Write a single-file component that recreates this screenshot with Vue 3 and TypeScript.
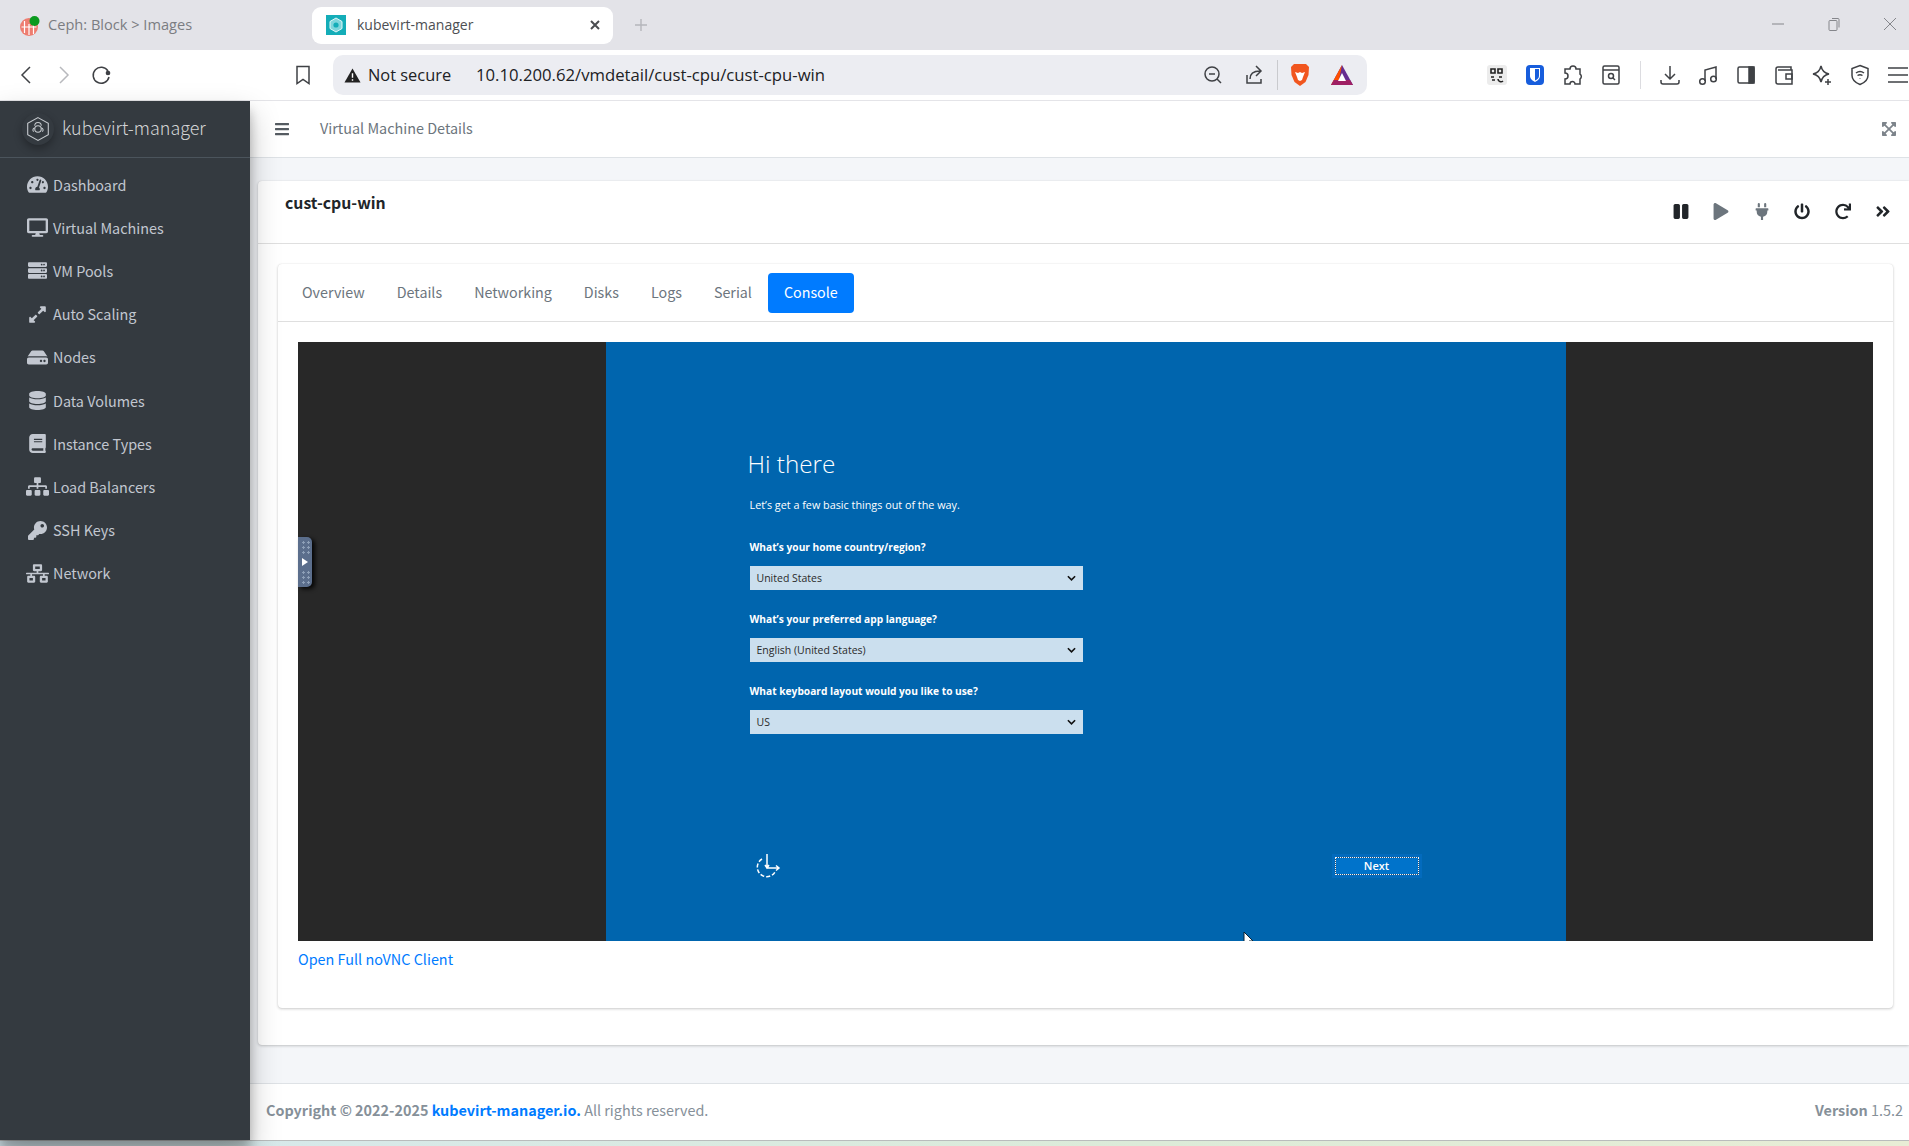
<template>
  <div class="window">
    <div class="tabstrip">
      <div class="tab">
        <svg class="fav" viewBox="0 0 20 20">
          <circle cx="9" cy="11" r="9" fill="#ee7d70" />
          <path d="M4.500 5v12M9 8v11M13.500 8v10M1.500 11h15" stroke="#fff" stroke-width="1.200" fill="none" />
          <circle cx="14.500" cy="5" r="5" fill="#0b9a1f" />
        </svg>
        <span class="tab-label">Ceph: Block &gt; Images</span>
      </div>
      <div class="tab is-active">
        <svg class="fav" viewBox="0 0 20 20">
          <rect width="20" height="20" fill="#14adb8" />
          <path d="M10 3l6 3.500v7L10 17l-6-3.500v-7z" fill="#7fd6dc" stroke="#e3f7f8" stroke-width="1" />
          <circle cx="10" cy="10" r="2.600" fill="#14adb8" />
        </svg>
        <span class="tab-title">kubevirt-manager</span>
        <svg class="tab-close" viewBox="0 0 12 12"><path d="M2 2l8 8M10 2l-8 8" /></svg>
      </div>
      <svg class="tab-new" viewBox="0 0 14 14"><path d="M7 1v12M1 7h12" /></svg>
      <div class="winctl">
        <svg viewBox="0 0 14 14"><path d="M1 7h12" /></svg>
        <svg viewBox="0 0 14 14"><rect x="2" y="3.500" width="8" height="10" rx="1" /><path d="M5 1.500h6a1 1 0 0 1 1 1v8" /></svg>
        <svg viewBox="0 0 14 14"><path d="M1 1l12 12M13 1L1 13" /></svg>
      </div>
    </div>

    <div class="toolbar">
      <div class="nav-btns">
        <svg class="tool" viewBox="0 0 22 22"><path d="M15 3l-8 8 8 8" /></svg>
        <svg class="tool is-off" viewBox="0 0 22 22"><path d="M7 3l8 8-8 8" /></svg>
        <svg class="tool" viewBox="0 0 22 22"><path d="M17 7a8 8 0 1 0 1 6" /><circle cx="17" cy="9" r="1.600" fill="#3f4145" /></svg>
      </div>
      <svg class="tool bookmark" viewBox="0 0 22 22"><path d="M5 2.500h12v17l-6-4-6 4z" /></svg>
      <div class="omnibox">
        <svg class="warn" viewBox="0 0 18 18"><path d="M9 1.500L17.500 16.500H.5z" fill="#222" /><path d="M9 6.500v5M9 13v1.600" stroke="#fff" stroke-width="1.500" /></svg>
        <span class="not-secure">Not secure</span>
        <span class="url">10.10.200.62/vmdetail/cust-cpu/cust-cpu-win</span>
        <div class="omni-icons">
          <svg class="tool zoom-btn" viewBox="0 0 22 22"><circle cx="10" cy="10" r="7" /><path d="M7 10h6M15 15l4 4" /></svg>
          <svg class="tool" viewBox="0 0 22 22"><path d="M4 11v8h14v-4M7 15c0-6 4-8 10-8M13 2l5 5-5 5" /></svg>
          <i class="omni-sep"></i>
          <svg class="brave" viewBox="0 0 22 24">
            <path d="M5 1h12l3 3-.5 8-3 7-5.500 4-5.500-4-3-7L2 4z" fill="#f1561f" />
            <path d="M6 9l3 1 2-1 2 1 3-1-2 5-1 3-2 1-2-1-1-3z" fill="#fff" />
          </svg>
          <svg class="bat" viewBox="0 0 24 22">
            <path d="M12 1L1 21h22z" fill="#662d91" />
            <path d="M12 1L1 21h7z" fill="#ff5000" />
            <path d="M1 21h22l-3-5H4z" fill="#9e1f63" />
            <path d="M12 9l-4 8h8z" fill="#fff" />
          </svg>
        </div>
      </div>
      <div class="ext-icons">
        <svg class="tool qr" viewBox="0 0 22 22">
          <rect x="1" y="1" width="20" height="20" rx="3" fill="#ececec" stroke="none" />
          <path d="M5 5h4v4H5zM12 5h4v4h-4zM5 13h3M6 16h3M13 13l3 0M12 15a3 3 0 0 0 5 2" stroke="#222" stroke-width="1.600" />
        </svg>
        <svg class="ext" viewBox="0 0 22 22">
          <rect x="2" y="1" width="18" height="20" rx="4" fill="#175ddc" />
          <path d="M6 4h10v8c0 3-3 5-5 6-2-1-5-3-5-6z" fill="#fff" />
          <path d="M11 5h4v7c0 2-2 3.500-4 4.500z" fill="#175ddc" />
        </svg>
        <svg class="tool" viewBox="0 0 22 22"><path d="M8 5a3 3 0 0 1 6 0h4v5a3 3 0 0 1 0 5v5h-5a2.500 2.500 0 0 0-5 0H3v-5a3 3 0 0 0 0-6V5z" /></svg>
        <svg class="tool" viewBox="0 0 22 22"><rect x="3" y="2" width="16" height="18" rx="1.500" /><path d="M3 6h16" /><circle cx="11" cy="12" r="2.500" /><path d="M13 14l2 2" /></svg>
        <i class="ext-sep"></i>
        <svg class="tool" viewBox="0 0 22 22"><path d="M11 2v13M6 10l5 5 5-5M2 16v2a2 2 0 0 0 2 2h14a2 2 0 0 0 2-2v-2" /></svg>
        <svg class="tool" viewBox="0 0 22 22"><path d="M8 17V6l11-3v12" /><circle cx="5.500" cy="17.500" r="2.800" /><circle cx="16.500" cy="15" r="2.800" /></svg>
        <svg class="tool" viewBox="0 0 22 22"><rect x="3" y="3" width="16" height="16" rx="1.500" /><path d="M14 3h5v16h-5z" fill="#3f4145" /></svg>
        <svg class="tool" viewBox="0 0 22 22"><path d="M18 6V3H5a2 2 0 0 0-2 2v13a2 2 0 0 0 2 2h14V6H5" /><rect x="13" y="10" width="6" height="5" /></svg>
        <svg class="tool" viewBox="0 0 22 22"><path d="M10 2c1 5 3 7 8 8-5 1-7 3-8 8-1-5-3-7-8-8 5-1 7-3 8-8zM17 15v6M14 18h6" /></svg>
        <svg class="tool" viewBox="0 0 22 22"><path d="M11 1.500l8 3v7c0 4-3 7-8 9-5-2-8-5-8-9v-7z" /><path d="M7 9c2.500-2 5.500-2 8 0M8.500 11.500c1.500-1 3.500-1 5 0M11 14v.5" /></svg>
        <svg class="tool" viewBox="0 0 22 22"><path d="M1 4h20M1 11h20M1 18h20" /></svg>
      </div>
    </div>

    <div class="app">
      <aside class="sidebar">
        <div class="brand">
          <span class="brand-mark">
            <svg viewBox="0 0 24 24">
              <path d="M12 1.500l9.500 5.300v10.400L12 22.500l-9.500-5.300V6.800z" />
              <circle cx="12" cy="12" r="3" />
              <path d="M8 14.500a2 2 0 0 1 1-3.500M16 14.500a2 2 0 0 0-1-3.500M9 9a3 3 0 0 1 6 0" />
            </svg>
          </span>
          <span class="brand-text">kubevirt-manager</span>
        </div>
        <nav class="menu">
          <a v-for="item in menu" :key="item.label" class="menu-item">
            <span class="menu-icon">
              <svg :viewBox="`0 0 ${item.w} 512`" :style="{ width: `${item.size}px` }"><path :d="item.d" /></svg>
            </span>
            <span class="menu-label">{{ item.label }}</span>
          </a>
        </nav>
      </aside>

      <div class="content">
        <header class="topbar">
          <svg class="fa bars" viewBox="0 0 448 512"><path :d="icons.bars" /></svg>
          <span class="crumb">Virtual Machine Details</span>
          <svg class="fa full" viewBox="0 0 448 512"><path :d="icons.expand" /></svg>
        </header>

        <main class="body">
          <section class="card">
            <div class="card-head">
              <h3 class="card-title">cust-cpu-win</h3>
              <div class="actions">
                <svg v-for="a in actions" :key="a.name" :class="{ 'is-muted': a.muted }" :viewBox="`0 0 ${a.w} 512`">
                  <path :d="a.d" />
                </svg>
              </div>
            </div>
            <div class="card-body">
              <div class="inner-card">
                <ul class="tabs">
                  <li v-for="t in tabs" :key="t" class="tab-link" :class="{ 'is-current': t === 'Console' }">{{ t }}</li>
                </ul>
                <div class="console">
                  <div class="vnc">
                    <div class="vnc-handle">
                      <i class="dots"></i>
                      <svg viewBox="0 0 6 8"><path d="M0 0l6 4-6 4z" fill="#fff" /></svg>
                      <i class="dots"></i>
                    </div>
                    <div class="setup">
                      <div class="setup-form">
                        <h1>Hi there</h1>
                        <p class="setup-sub">Let’s get a few basic things out of the way.</p>
                        <template v-for="f in setupFields" :key="f.label">
                          <div class="setup-label">{{ f.label }}</div>
                          <div class="setup-select">
                            <span>{{ f.value }}</span>
                            <svg viewBox="0 0 10 7"><path d="M1 1l4 4 4-4" /></svg>
                          </div>
                        </template>
                      </div>
                      <div class="setup-foot">
                        <svg class="ease" viewBox="0 0 26 26">
                          <path d="M7 6a9.500 9.500 0 1 0 13 13" stroke-dasharray="4 2" />
                          <path d="M12 1v14h12M10 12l2 3 2-3M21 12.500l3 2.500-3 2.500" />
                        </svg>
                        <div class="next-btn"><span>Next</span></div>
                      </div>
                      <svg class="cursor" viewBox="0 0 10 14"><path d="M1 0v12l3-3 2 5 2-1-2-4h4z" fill="#fff" stroke="#0b2233" stroke-width="1" /></svg>
                    </div>
                  </div>
                  <a class="novnc-link">Open Full noVNC Client</a>
                </div>
              </div>
            </div>
          </section>
        </main>

        <footer class="footer">
          <div><b>Copyright © 2022-2025 <span class="link">kubevirt-manager.io.</span></b> All rights reserved.</div>
          <div><b>Version</b> 1.5.2</div>
        </footer>
      </div>
    </div>
    <div class="desktop"></div>
  </div>
</template>

<script setup lang="ts">
const icons = {
  bars: 'M16 132h416c8.837 0 16-7.163 16-16V76c0-8.837-7.163-16-16-16H16C7.163 60 0 67.163 0 76v40c0 8.837 7.163 16 16 16zm0 160h416c8.837 0 16-7.163 16-16v-40c0-8.837-7.163-16-16-16H16c-8.837 0-16 7.163-16 16v40c0 8.837 7.163 16 16 16zm0 160h416c8.837 0 16-7.163 16-16v-40c0-8.837-7.163-16-16-16H16c-8.837 0-16 7.163-16 16v40c0 8.837 7.163 16 16 16z',
  expand: 'M448 344v112a23.94 23.94 0 0 1-24 24H312c-21.39 0-32.09-25.9-17-41l36.2-36.2L224 295.6 116.77 402.9 153 439c15.09 15.1 4.39 41-17 41H24a23.94 23.94 0 0 1-24-24V344c0-21.4 25.89-32.1 41-17l36.19 36.2L184.46 256 77.18 148.7 41 185c-15.1 15.1-41 4.4-41-17V56a23.94 23.94 0 0 1 24-24h112c21.39 0 32.09 25.9 17 41l-36.2 36.2L224 216.4l107.23-107.3L295 73c-15.09-15.1-4.39-41 17-41h112a23.94 23.94 0 0 1 24 24v112c0 21.4-25.89 32.1-41 17l-36.19-36.2L263.54 256l107.28 107.3L407 327.1c15.1-15.2 41-4.5 41 16.9z',
};

const menu = [
  { label: 'Dashboard', w: 576, size: 21, d: 'M288 32C128.94 32 0 160.94 0 320c0 52.8 14.25 102.26 39.06 144.8 5.61 9.62 16.3 15.2 27.44 15.2h443c11.14 0 21.83-5.58 27.44-15.2C561.75 422.26 576 372.8 576 320c0-159.06-128.94-288-288-288zm0 64c14.71 0 26.58 10.13 30.32 23.65-1.11 2.26-2.64 4.23-3.45 6.67l-9.22 27.67c-5.13 3.49-10.97 6.01-17.64 6.01-17.67 0-32-14.33-32-32S270.33 96 288 96zM96 384c-17.67 0-32-14.33-32-32s14.33-32 32-32 32 14.33 32 32-14.33 32-32 32zm48-160c-17.67 0-32-14.33-32-32s14.33-32 32-32 32 14.33 32 32-14.33 32-32 32zm246.77-72.41l-61.33 184C343.13 347.33 352 364.54 352 384c0 11.72-3.38 22.55-8.88 32H232.88c-5.5-9.45-8.88-20.28-8.88-32 0-33.94 26.5-61.43 59.9-63.59l61.34-184.01c4.17-12.56 17.73-19.45 30.36-15.17 12.57 4.19 19.35 17.79 15.17 30.36zm14.66 57.2l15.52-46.55c3.47-1.29 7.13-2.23 11.05-2.23 17.67 0 32 14.33 32 32s-14.33 32-32 32c-11.38-.01-20.89-6.28-26.57-15.22zM480 384c-17.67 0-32-14.33-32-32s14.33-32 32-32 32 14.33 32 32-14.33 32-32 32z' },
  { label: 'Virtual Machines', w: 576, size: 21, d: 'M528 0H48C21.5 0 0 21.5 0 48v320c0 26.5 21.5 48 48 48h192l-16 48h-72c-13.3 0-24 10.7-24 24s10.7 24 24 24h272c13.3 0 24-10.7 24-24s-10.7-24-24-24h-72l-16-48h192c26.5 0 48-21.5 48-48V48c0-26.5-21.5-48-48-48zm-16 352H64V64h448v288z' },
  { label: 'VM Pools', w: 512, size: 19, d: 'M480 160H32c-17.673 0-32-14.327-32-32V64c0-17.673 14.327-32 32-32h448c17.673 0 32 14.327 32 32v64c0 17.673-14.327 32-32 32zm-48-88c-13.255 0-24 10.745-24 24s10.745 24 24 24 24-10.745 24-24-10.745-24-24-24zm-64 0c-13.255 0-24 10.745-24 24s10.745 24 24 24 24-10.745 24-24-10.745-24-24-24zm112 248H32c-17.673 0-32-14.327-32-32v-64c0-17.673 14.327-32 32-32h448c17.673 0 32 14.327 32 32v64c0 17.673-14.327 32-32 32zm-48-88c-13.255 0-24 10.745-24 24s10.745 24 24 24 24-10.745 24-24-10.745-24-24-24zm-64 0c-13.255 0-24 10.745-24 24s10.745 24 24 24 24-10.745 24-24-10.745-24-24-24zm112 248H32c-17.673 0-32-14.327-32-32v-64c0-17.673 14.327-32 32-32h448c17.673 0 32 14.327 32 32v64c0 17.673-14.327 32-32 32zm-48-88c-13.255 0-24 10.745-24 24s10.745 24 24 24 24-10.745 24-24-10.745-24-24-24zm-64 0c-13.255 0-24 10.745-24 24s10.745 24 24 24 24-10.745 24-24-10.745-24-24-24z' },
  { label: 'Auto Scaling', w: 448, size: 17, d: 'M212.686 315.314L120 408l32.922 31.029c15.12 15.12 4.412 40.971-16.97 40.971h-112C10.697 480 0 469.255 0 456V344c0-21.382 25.803-32.09 40.922-16.971L72 360l92.686-92.686c6.248-6.248 16.379-6.248 22.627 0l25.373 25.373c6.249 6.248 6.249 16.378 0 22.627zm22.628-118.628L328 104l-32.922-31.029C279.958 57.851 290.666 32 312.048 32h112C437.303 32 448 42.745 448 56v112c0 21.382-25.803 32.09-40.922 16.971L376 152l-92.686 92.686c-6.248 6.248-16.379 6.248-22.627 0l-25.373-25.373c-6.249-6.248-6.249-16.378 0-22.627z' },
  { label: 'Nodes', w: 576, size: 21, d: 'M576 304v96c0 26.51-21.49 48-48 48H48c-26.51 0-48-21.49-48-48v-96c0-26.51 21.49-48 48-48h480c26.51 0 48 21.49 48 48zm-48-80a79.557 79.557 0 0 1 30.777 6.165L462.25 85.374A48.003 48.003 0 0 0 422.311 64H153.689a48 48 0 0 0-39.938 21.374L17.223 230.165A79.557 79.557 0 0 1 48 224h480zm-48 96c-17.673 0-32 14.327-32 32s14.327 32 32 32 32-14.327 32-32-14.327-32-32-32zm-96 0c-17.673 0-32 14.327-32 32s14.327 32 32 32 32-14.327 32-32-14.327-32-32-32z' },
  { label: 'Data Volumes', w: 448, size: 17, d: 'M448 73.143v45.714C448 159.143 347.667 192 224 192S0 159.143 0 118.857V73.143C0 32.857 100.333 0 224 0s224 32.857 224 73.143zM448 176v102.857C448 319.143 347.667 352 224 352S0 319.143 0 278.857V176c48.125 33.143 136.208 48.572 224 48.572S399.874 209.143 448 176zm0 160v102.857C448 479.143 347.667 512 224 512S0 479.143 0 438.857V336c48.125 33.143 136.208 48.572 224 48.572S399.874 369.143 448 336z' },
  { label: 'Instance Types', w: 448, size: 17, d: 'M448 360V24c0-13.3-10.7-24-24-24H96C43 0 0 43 0 96v320c0 53 43 96 96 96h328c13.3 0 24-10.7 24-24v-16c0-7.5-3.5-14.3-8.9-18.7-4.2-15.4-4.2-59.3 0-74.7 5.4-4.3 8.9-11.1 8.9-18.6zM128 134c0-3.3 2.7-6 6-6h212c3.3 0 6 2.7 6 6v20c0 3.3-2.7 6-6 6H134c-3.3 0-6-2.7-6-6v-20zm0 64c0-3.3 2.7-6 6-6h212c3.3 0 6 2.7 6 6v20c0 3.3-2.7 6-6 6H134c-3.3 0-6-2.7-6-6v-20zm253.4 250H96c-17.7 0-32-14.3-32-32 0-17.6 14.4-32 32-32h285.4c-1.9 17.1-1.9 46.9 0 64z' },
  { label: 'Load Balancers', w: 640, size: 23, d: 'M128 352H32c-17.67 0-32 14.33-32 32v96c0 17.67 14.33 32 32 32h96c17.67 0 32-14.33 32-32v-96c0-17.67-14.33-32-32-32zm-24-80h192v48h48v-48h192v48h48v-57.59c0-21.17-17.23-38.41-38.41-38.41H344v-64h40c17.67 0 32-14.33 32-32V32c0-17.67-14.33-32-32-32H256c-17.67 0-32 14.33-32 32v96c0 17.67 14.33 32 32 32h40v64H94.41C73.23 224 56 241.23 56 262.41V320h48v-48zm264 80h-96c-17.67 0-32 14.33-32 32v96c0 17.67 14.33 32 32 32h96c17.67 0 32-14.33 32-32v-96c0-17.67-14.33-32-32-32zm240 0h-96c-17.67 0-32 14.33-32 32v96c0 17.67 14.33 32 32 32h96c17.67 0 32-14.33 32-32v-96c0-17.67-14.33-32-32-32z' },
  { label: 'SSH Keys', w: 512, size: 19, d: 'M512 176.001C512 273.203 433.202 352 336 352c-11.22 0-22.19-1.062-32.827-3.069l-24.012 27.014A23.999 23.999 0 0 1 261.223 384H224v40c0 13.255-10.745 24-24 24h-40v40c0 13.255-10.745 24-24 24H24c-13.255 0-24-10.745-24-24v-78.059c0-6.365 2.529-12.47 7.029-16.971l161.802-161.802C163.108 213.814 160 195.271 160 176 160 78.798 238.797.001 335.999 0 433.488-.001 512 78.511 512 176.001zM336 128c0 26.51 21.49 48 48 48s48-21.49 48-48-21.49-48-48-48-48 21.49-48 48z' },
  { label: 'Network', w: 640, size: 23, d: 'M640 264v-16c0-8.84-7.16-16-16-16H344v-40h72c17.67 0 32-14.33 32-32V32c0-17.67-14.33-32-32-32H224c-17.67 0-32 14.33-32 32v128c0 17.67 14.33 32 32 32h72v40H16c-8.84 0-16 7.16-16 16v16c0 8.84 7.16 16 16 16h104v40H64c-17.67 0-32 14.33-32 32v128c0 17.67 14.33 32 32 32h160c17.67 0 32-14.33 32-32V352c0-17.67-14.33-32-32-32h-56v-40h304v40h-56c-17.67 0-32 14.33-32 32v128c0 17.67 14.33 32 32 32h160c17.67 0 32-14.33 32-32V352c0-17.67-14.33-32-32-32h-56v-40h104c8.84 0 16-7.16 16-16zM256 128V64h128v64H256zm-64 320H96v-64h96v64zm352 0h-96v-64h96v64z' },
];

const actions = [
  { name: 'pause', w: 448, d: 'M144 479H48c-26.5 0-48-21.5-48-48V79c0-26.5 21.5-48 48-48h96c26.5 0 48 21.5 48 48v352c0 26.5-21.5 48-48 48zm304-48V79c0-26.5-21.5-48-48-48h-96c-26.5 0-48 21.5-48 48v352c0 26.500 21.5 48 48 48h96c26.5 0 48-21.5 48-48z' },
  { name: 'play', w: 448, muted: true, d: 'M424.4 214.7L72.4 6.6C43.8-10.3 0 6.1 0 47.9V464c0 37.5 40.7 60.1 72.4 41.3l352-208c31.4-18.5 31.5-64.1 0-82.6z' },
  { name: 'plug', w: 384, muted: true, d: 'M320,32a32,32,0,0,0-64,0v96h64Zm48,128H16A16,16,0,0,0,0,176v32a16,16,0,0,0,16,16H32v32A160.07,160.07,0,0,0,160,412.8V512h64V412.8A160.07,160.07,0,0,0,352,256V224h16a16,16,0,0,0,16-16V176A16,16,0,0,0,368,160ZM128,32a32,32,0,0,0-64,0v96h64Z' },
  { name: 'power', w: 512, d: 'M400 54.1c63 45 104 118.6 104 201.9 0 136.8-110.8 247.7-247.5 248C120 504.3 8.2 393 8 256.4 7.9 173.1 48.9 99.3 111.8 54.2c11.7-8.3 28-4.8 35 7.7L162.6 90c5.9 10.5 3.1 23.8-6.6 31-41.5 30.8-68 79.6-68 134.9-.1 92.3 74.5 168.1 168 168.1 91.6 0 168.6-74.2 168-169.1-.3-51.8-24.7-101.8-68.1-134-9.7-7.2-12.4-20.5-6.5-30.9l15.8-28.1c7-12.4 23.2-16.1 34.8-7.8zM296 264V24c0-13.3-10.7-24-24-24h-32c-13.3 0-24 10.7-24 24v240c0 13.3 10.7 24 24 24h32c13.3 0 24-10.7 24-24z' },
  { name: 'redo', w: 512, d: 'M500.33 0h-47.41a12 12 0 0 0-12 12.57l4 82.76A247.42 247.42 0 0 0 256 8C119.34 8 7.9 119.53 8 256.19 8.1 393.07 119.1 504 256 504a247.1 247.1 0 0 0 166.18-63.91 12 12 0 0 0 .48-17.43l-34-34a12 12 0 0 0-16.38-.55A176 176 0 1 1 402.1 157.8l-101.53-4.87a12 12 0 0 0-12.57 12v47.41a12 12 0 0 0 12 12h200.33a12 12 0 0 0 12-12V12a12 12 0 0 0-12-12z' },
  { name: 'more', w: 448, d: 'M224.3 273l-136 136c-9.4 9.4-24.6 9.4-33.9 0l-22.6-22.6c-9.4-9.4-9.4-24.6 0-33.9l96.4-96.4-96.4-96.4c-9.4-9.4-9.4-24.6 0-33.9L54.3 103c9.4-9.4 24.6-9.4 33.9 0l136 136c9.5 9.4 9.5 24.6.1 34zm192-34l-136-136c-9.4-9.4-24.6-9.4-33.9 0l-22.6 22.6c-9.4 9.4-9.4 24.6 0 33.9l96.4 96.4-96.4 96.4c-9.4 9.4-9.4 24.6 0 33.9l22.6 22.6c9.4 9.4 24.6 9.4 33.9 0l136-136c9.4-9.2 9.4-24.4 0-33.8z' },
];

const tabs = ['Overview', 'Details', 'Networking', 'Disks', 'Logs', 'Serial', 'Console'];

const setupFields = [
  { label: 'What’s your home country/region?', value: 'United States' },
  { label: 'What’s your preferred app language?', value: 'English (United States)' },
  { label: 'What keyboard layout would you like to use?', value: 'US' },
];
</script>

<style>
body {
  margin: 0;
  background: #fff;
}
</style>

<style scoped>
.window {
  width: 1909px;
  height: 1146px;
  display: flex;
  flex-direction: column;
  overflow: hidden;
  font-family: "Noto Sans CJK SC", "Noto Sans", sans-serif;
  font-size: 14.400px;
  color: #212529;
}

.tabstrip {
  height: 50px;
  background: #e3e3e8;
  display: flex;
  align-items: flex-start;
  font-family: "Open Sans", sans-serif;
  font-size: 14px;
  color: #7b7d82;
  flex: none;
}

.tab {
  width: 283px;
  height: 37px;
  margin-top: 7px;
  margin-left: 20px;
  display: flex;
  align-items: center;
  gap: 8px;
  box-sizing: border-box;
  margin-right: 9px;
}

.tab-label {
  font-size: 14.600px;
  padding-bottom: 3px;
}

.tab.is-active {
  width: 301px;
  margin-left: 0;
  margin-right: 0;
  background: #fff;
  border-radius: 9px;
  padding: 0 12px 2px 14px;
  gap: 11px;
  color: #4d4f53;
}

.fav {
  width: 20px;
  height: 20px;
  flex: none;
}

.tab-title {
  flex: 1;
}

.tab-close {
  width: 12px;
  height: 12px;
  fill: none;
  stroke: #4a4c50;
  stroke-width: 2;
}

.tab-new {
  width: 14px;
  height: 14px;
  margin: 18px 0 0 21px;
  fill: none;
  stroke: #b5b6bb;
  stroke-width: 1.400;
}

.winctl {
  margin-left: auto;
  display: flex;
  gap: 42px;
  padding: 17px 12px 0 0;
}

.winctl svg {
  width: 14px;
  height: 14px;
  fill: none;
  stroke: #85868b;
  stroke-width: 1;
}

.toolbar {
  height: 50px;
  background: #fff;
  border-bottom: 1px solid #e4e4e8;
  border-radius: 10px 0 0 0;
  display: flex;
  align-items: center;
  flex: none;
}

.nav-btns {
  display: flex;
  align-items: center;
  gap: 16px;
  margin-left: 15px;
  width: 278px;
}

.tool {
  width: 22px;
  height: 22px;
  fill: none;
  stroke: #3f4145;
  stroke-width: 1.500;
  flex: none;
}

.tool.is-off {
  stroke: #b8b9bd;
}

.bookmark {
  margin-right: 19px;
}

.omnibox {
  width: 1034px;
  height: 40px;
  background: #ecedf2;
  border-radius: 10px;
  display: flex;
  align-items: center;
  font-family: "Open Sans", sans-serif;
  font-size: 16.700px;
  color: #202124;
  padding: 0 13px 0 11px;
  box-sizing: border-box;
  flex: none;
}

.warn {
  width: 17px;
  height: 17px;
}

.not-secure {
  margin-left: 7px;
  width: 108px;
  flex: none;
  font-size: 16.400px;
  padding-bottom: 1px;
}

.url {
  flex: 1;
  white-space: nowrap;
  padding-bottom: 1px;
}

.omni-icons {
  display: flex;
  align-items: center;
  gap: 17px;
}

.zoom-btn {
  margin-right: 2px;
}

.omni-sep {
  width: 1px;
  height: 30px;
  background: #c9cace;
  margin: 0 -6px 0 -5px;
}

.brave {
  width: 22px;
  height: 24px;
}

.bat {
  width: 24px;
  height: 22px;
  margin-left: 2px;
}

.ext-icons {
  display: flex;
  align-items: center;
  gap: 16px;
  margin-left: 119px;
}

.ext {
  width: 22px;
  height: 22px;
}

.qr {
  stroke: #222;
}

.ext-sep {
  width: 1px;
  height: 28px;
  background: #dcdce0;
  margin: 0 2px;
}

.app {
  flex: 1;
  min-height: 0;
  display: flex;
}

.sidebar {
  width: 250px;
  flex: none;
  background: #343a40;
  color: #c2c7d0;
  box-shadow: 0 14px 28px rgba(0, 0, 0, 0.25), 0 10px 10px rgba(0, 0, 0, 0.22);
  position: relative;
  z-index: 2;
}

.brand {
  height: 56px;
  border-bottom: 1px solid #4b545c;
  display: flex;
  align-items: center;
  padding-left: 22px;
  gap: 8px;
}

.brand-mark {
  width: 32px;
  height: 32px;
  border-radius: 50%;
  background: #343a40;
  box-shadow: 0 4px 8px rgba(0, 0, 0, 0.3);
  display: grid;
  place-items: center;
}

.brand-mark svg {
  width: 26px;
  height: 26px;
  fill: none;
  stroke: #c6cace;
  stroke-width: 1;
}

.brand-text {
  font-size: 17.900px;
  font-weight: 300;
  color: rgba(255, 255, 255, 0.8);
  padding-bottom: 5px;
}

.menu {
  display: flex;
  flex-direction: column;
  padding-top: 5px;
}

.menu-item {
  height: 43.200px;
  display: flex;
  align-items: center;
  padding-left: 26px;
  gap: 4px;
}

.menu-icon {
  width: 23px;
  display: grid;
  place-items: center;
}

.menu-icon svg {
  display: block;
  height: 19px;
  fill: #c2c7d0;
}

.menu-label {
  padding-bottom: 1px;
}

.content {
  flex: 1;
  min-width: 0;
  display: flex;
  flex-direction: column;
  background: #f4f6f9;
}

.topbar {
  height: 56px;
  background: #fff;
  border-bottom: 1px solid #dee2e6;
  display: flex;
  align-items: center;
  padding: 0 13px 0 25px;
  flex: none;
}

.fa {
  width: 14px;
  height: 16px;
  fill: #555b61;
}

.crumb {
  margin-left: 31px;
  color: #6c757d;
  padding-bottom: 4px;
}

.full {
  margin-left: auto;
  fill: #7d848b;
}

.body {
  flex: 1;
  min-height: 0;
  padding: 23px 0 0 8px;
}

.card {
  height: 864px;
  background: #fff;
  border-radius: 4px 0 0 4px;
  box-shadow: 0 0 1px rgba(0, 0, 0, 0.125), 0 1px 3px rgba(0, 0, 0, 0.2);
  display: flex;
  flex-direction: column;
  box-sizing: border-box;
}

.card-head {
  height: 63px;
  flex: none;
  border-bottom: 1px solid rgba(0, 0, 0, 0.125);
  box-sizing: border-box;
  display: flex;
  justify-content: space-between;
  padding: 10px 18px 0 27px;
}

.card-title {
  margin: 0;
  font-size: 15.800px;
  font-weight: 700;
  line-height: 24px;
  color: #212529;
}

.actions {
  display: flex;
  gap: 24.500px;
  padding-top: 12px;
}

.actions svg {
  height: 17px;
  width: 16px;
  fill: #212529;
}

.actions svg.is-muted {
  fill: #6c757d;
}

.card-body {
  flex: 1;
  min-height: 0;
  padding: 20px 16px 37px 20px;
}

.inner-card {
  height: 100%;
  background: #fff;
  border-radius: 4px;
  box-shadow: 0 0 1px rgba(0, 0, 0, 0.125), 0 1px 3px rgba(0, 0, 0, 0.2);
  display: flex;
  flex-direction: column;
}

.tabs {
  list-style: none;
  margin: 0;
  padding: 9px 8px 8px;
  display: flex;
  border-bottom: 1px solid rgba(0, 0, 0, 0.125);
  flex: none;
  font-size: 14.300px;
}

.tab-link {
  padding: 0 16px;
  height: 40px;
  line-height: 38px;
  color: #6c757d;
  border-radius: 4px;
}

.tab-link.is-current {
  background: #007bff;
  color: #fff;
}

.console {
  padding: 20px 20px 0;
  flex: 1;
}

.vnc {
  height: 599px;
  background: #282828;
  display: flex;
  justify-content: center;
  position: relative;
}

.vnc-handle {
  position: absolute;
  left: 0;
  top: 195px;
  width: 14px;
  height: 50px;
  background: #5b6e8c;
  border-radius: 0 5px 5px 0;
  box-shadow: 3px 2px 4px rgba(0, 0, 0, 0.85);
  display: flex;
  flex-direction: column;
  align-items: center;
  justify-content: center;
  gap: 4px;
}

.vnc-handle svg {
  width: 6px;
  height: 8px;
}

.dots {
  width: 9px;
  height: 14px;
  background-image: radial-gradient(#8ea0b8 1px, transparent 1.300px);
  background-size: 5px 5px;
}

.setup {
  width: 960px;
  background: #0065ae;
  color: #fff;
  position: relative;
  display: flex;
  flex-direction: column;
  padding: 105px 144px 0 144px;
  box-sizing: border-box;
  font-family: "Open Sans", sans-serif;
  overflow: hidden;
}

.setup-form {
  width: 333px;
}

.setup h1 {
  margin: 0 0 0 -2px;
  font-size: 24.300px;
  font-weight: 300;
  line-height: 34px;
  white-space: nowrap;
}

.setup-sub {
  margin: 16px 0 0;
  font-size: 10.800px;
  line-height: 16px;
  white-space: nowrap;
}

.setup-label {
  font-size: 10.200px;
  font-weight: 700;
  line-height: 16px;
  margin-top: 26px;
  white-space: nowrap;
}

.setup-sub + .setup-label {
  margin-top: 26px;
}

.setup-select {
  height: 24px;
  margin-top: 11px;
  background: #cbdfee;
  color: #2a2a2a;
  font-size: 10.500px;
  display: flex;
  align-items: center;
  justify-content: space-between;
  padding: 0 7px 0 7px;
}

.setup-select + .setup-label {
  margin-top: 21px;
}

.setup-select svg {
  width: 9px;
  height: 7px;
  fill: none;
  stroke: #111;
  stroke-width: 1.800;
}

.setup-foot {
  display: flex;
  justify-content: space-between;
  align-items: center;
  margin-top: 120px;
  height: 24px;
}

.ease {
  width: 26px;
  height: 26px;
  fill: none;
  stroke: #fff;
  stroke-width: 1.500;
  margin-left: 5px;
}

.next-btn {
  width: 90px;
  height: 24px;
  padding: 3px;
  box-sizing: border-box;
  background: #036bbd;
  display: flex;
  margin-left: auto;
  flex: none;
}

.next-btn span {
  flex: 1;
  border: 1px dotted #f2f5f8;
  background: linear-gradient(#0073cb, #0073cb) padding-box, linear-gradient(#2d4f6e, #2d4f6e) border-box;
  font-size: 11px;
  font-weight: 600;
  text-align: center;
  line-height: 16px;
}

.cursor {
  position: absolute;
  left: 637px;
  bottom: -5px;
  width: 10px;
  height: 14px;
}

.novnc-link {
  display: block;
  margin-top: 7px;
  color: #007bff;
  line-height: 22px;
}

.footer {
  height: 57px;
  flex: none;
  background: #fff;
  border-top: 1px solid #dee2e6;
  box-sizing: border-box;
  display: flex;
  align-items: center;
  justify-content: space-between;
  padding: 0 6px 5px 16px;
  color: #869099;
}

.link {
  color: #007bff;
}

.desktop {
  height: 6px;
  flex: none;
  background: linear-gradient(90deg, #d5e8ef, #dcebd8 60%, #e8edd5);
  border-top: 1px solid #b9bcbc;
  box-sizing: border-box;
}
</style>
